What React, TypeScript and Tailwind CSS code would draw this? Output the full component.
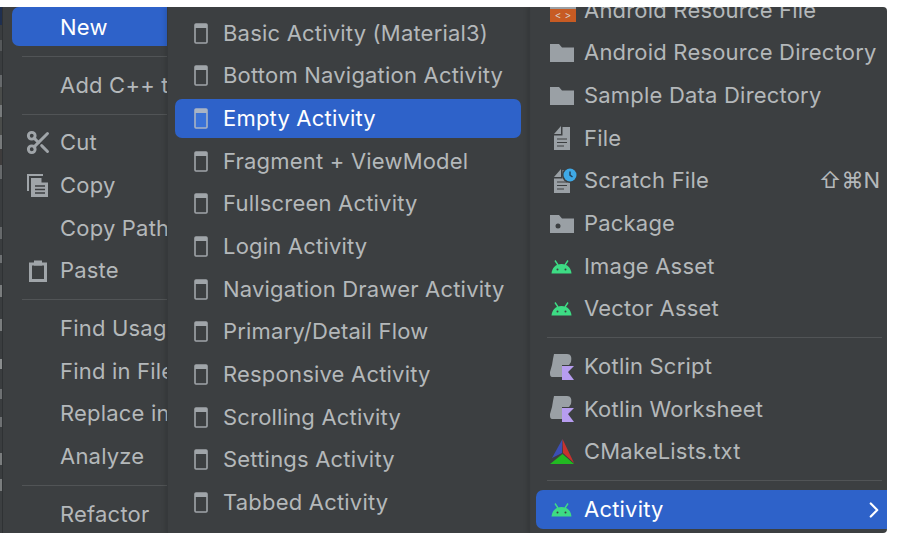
import { ChevronRight, Scissors } from 'lucide-react'
import type { ReactNode } from 'react'

const font = "font-['Inter','Noto_Sans',sans-serif]"

function Separator({ className = '' }: { className?: string }) {
  return (
    <div className={`flex h-[15px] items-center ${className}`}>
      <div className="h-px w-full bg-[#515456]" />
    </div>
  )
}

function Row({ icon, label, right, selected }: { icon?: ReactNode; label: string; right?: ReactNode; selected?: boolean }) {
  return (
    <div className={`flex h-[42.67px] shrink-0 items-center whitespace-nowrap text-[22px] tracking-[0.2px] ${selected ? 'text-white' : 'text-[#b4b8ba]'}`}>
      {icon}
      <span>{label}</span>
      {right}
    </div>
  )
}

function Phone({ selected }: { selected?: boolean }) {
  return (
    <svg width="14" height="21" viewBox="0 0 14 21" className="mr-[15px] ml-[19px] shrink-0">
      <rect x="1" y="1" width="12" height="19" rx="1" fill={selected ? '#3a72d8' : 'none'} stroke={selected ? '#a9b4c4' : '#a0a5a9'} strokeWidth="1.6" />
      <rect x="1" y="1" width="12" height="4" fill={selected ? '#a9b4c4' : '#a0a5a9'} />
    </svg>
  )
}

function Android() {
  return (
    <svg width="21" height="15" viewBox="0 0 21 15" className="shrink-0">
      <path d="M0.5 14.5C1 9 4.5 5 10.5 5S20 9 20.5 14.5Z" fill="#3ddc84" />
      <path d="M4 1.5L7 6M17 1.5L14 6" stroke="#3ddc84" strokeWidth="1.4" />
      <circle cx="6.5" cy="10.5" r="1" fill="#3c3f41" />
      <circle cx="14.5" cy="10.5" r="1" fill="#3c3f41" />
    </svg>
  )
}

function Folder({ dot }: { dot?: boolean }) {
  return (
    <svg width="24" height="18" viewBox="0 0 24 18" className="shrink-0">
      <path d="M0 0H9L12 3.5H24V18H0Z" fill="#9aa0a5" />
      {dot && <circle cx="8" cy="11" r="2.5" fill="#3c3f41" />}
    </svg>
  )
}

function FileGlyph() {
  return (
    <svg width="17" height="24" viewBox="0 0 17 24">
      <path d="M8 0V8H1Z" fill="#9aa0a5" />
      <path d="M1 9.5H9.5V1H17V24H1Z" fill="#9aa0a5" />
      <path d="M4 13H14M4 16.5H14M4 20H11" stroke="#3c3f41" strokeWidth="1.2" />
    </svg>
  )
}

function ClockBadge() {
  return (
    <svg width="16" height="16" viewBox="0 0 16 16" className="absolute -top-[2px] left-[9px]">
      <circle cx="8" cy="8" r="8" fill="#3c3f41" />
      <circle cx="8" cy="8" r="6.5" fill="#3fa9e6" />
      <path d="M8 4.5V8.2L10.5 10" fill="none" stroke="#24415a" strokeWidth="1.5" />
    </svg>
  )
}

function Kotlin() {
  return (
    <svg width="24" height="26" viewBox="0 0 24 26" className="shrink-0">
      <path d="M4 0H17C21 0 22 3 21 8L19 11H12V23H3C0 23 0 21 0 18L2 11L3 5Z" fill="#9aa0a5" />
      <path d="M12 12H24L18 18L24 26H12Z" fill="#b79df0" />
    </svg>
  )
}

function CMake() {
  return (
    <svg width="25" height="25" viewBox="0 0 25 25" className="shrink-0">
      <path d="M12.5 0L2 19L12 14Z" fill="#3b4fb5" />
      <path d="M12.5 0L24 24L13 14Z" fill="#c8322e" />
      <path d="M0 25L12.5 15L24 25Z" fill="#22b922" />
    </svg>
  )
}

function CopyGlyph() {
  return (
    <svg width="22" height="23" viewBox="0 0 22 23" className="ml-[1px]">
      <path d="M1 17V1H16" fill="none" stroke="#a0a5a9" strokeWidth="2" />
      <path d="M4 4H14.5V8.5H21V23H4Z" fill="#a0a5a9" />
      <path d="M8 12H18M8 15.5H18M8 19H18" stroke="#3c3f41" strokeWidth="1.4" />
    </svg>
  )
}

function PasteGlyph() {
  return (
    <svg width="18" height="22" viewBox="0 0 18 22" className="ml-[3px]">
      <path d="M1.5 4H16.5V20.5H1.5Z" fill="none" stroke="#a0a5a9" strokeWidth="3" />
      <rect x="5" y="0.5" width="8" height="5" fill="#a0a5a9" />
    </svg>
  )
}

function Slot({ children }: { children?: ReactNode }) {
  return <div className="flex w-[57px] shrink-0 items-center pl-[23px]">{children}</div>
}

const middle = [
  'Basic Activity (Material3)',
  'Bottom Navigation Activity',
  'Empty Activity',
  'Fragment + ViewModel',
  'Fullscreen Activity',
  'Login Activity',
  'Navigation Drawer Activity',
  'Primary/Detail Flow',
  'Responsive Activity',
  'Scrolling Activity',
  'Settings Activity',
  'Tabbed Activity',
]

// slivers of the editor text that show behind the menu: [height, colour]
const strip: [number, string][] = [
  [18, '#1f2f4f'], [15, '#3a3d3f'], [11, '#55585a'], [24, '#3a3d3f'], [12, '#66696b'], [18, '#4a4c4a'],
  [12, '#777a7b'], [18, '#4a4c4a'], [14, '#777a7b'], [16, '#3e3c3c'], [14, '#66696b'], [48, '#3a3d3f'],
  [12, '#66696b'], [16, '#3a3d3f'], [8, '#6e7173'], [22, '#3a3d3f'], [12, '#7a7d7e'], [22, '#3a3d3f'],
  [12, '#7a7d7e'], [28, '#3a3d3f'], [10, '#8a8d8e'], [20, '#3a3d3f'], [10, '#6e7173'], [18, '#3a3d3f'],
  [10, '#6e7173'], [26, '#3a3d3f'], [12, '#7a7d7e'], [14, '#3a3d3f'], [12, '#7a7d7e'],
]

export default function App() {
  return (
    <div className={`h-[541px] w-[897px] overflow-hidden bg-white pt-[7px] pr-[10px] pb-[8px] ${font}`}>
      <div className="flex h-full overflow-hidden rounded-r-[4px] bg-[#3c3f41]">
        <div className="flex w-[3px] shrink-0 flex-col overflow-hidden border-r border-[#2f3234]">
          {strip.map(([h, c], i) => (
            <div key={i} className="shrink-0" style={{ height: h, backgroundColor: c }} />
          ))}
        </div>

        {/* main context menu */}
        <div className="w-[164px] shrink-0 overflow-hidden">
          <div className="ml-[9px] flex h-[39px] items-center rounded-l-[7px] bg-[#2e62c9] pt-[1px] pl-[48px] text-[22px] tracking-[0.2px] text-white">New</div>
          <div className="h-[3px]" />
          <Separator className="pl-[19px]" />
          <Row label="Add C++ to Module" icon={<Slot />} />
          <Separator className="pl-[19px]" />
          <Row label="Cut" icon={<Slot><Scissors size={27} strokeWidth={2.6} className="-ml-[1px] text-[#a0a5a9]" /></Slot>} />
          <Row label="Copy" icon={<Slot><CopyGlyph /></Slot>} />
          <Row label="Copy Path" icon={<Slot />} />
          <Row label="Paste" icon={<Slot><PasteGlyph /></Slot>} />
          <Separator className="pl-[19px]" />
          <Row label="Find Usages" icon={<Slot />} />
          <Row label="Find in Files" icon={<Slot />} />
          <Row label="Replace in Files" icon={<Slot />} />
          <Row label="Analyze" icon={<Slot />} />
          <Separator className="pl-[19px]" />
          <Row label="Refactor" icon={<Slot />} />
        </div>

        {/* activity templates */}
        <div className="w-[362px] shrink-0 border-l border-[#36393b] pt-[5px] shadow-[-2px_0_4px_rgba(0,0,0,0.12)]">
          {middle.map(m =>
            m === 'Empty Activity' ? (
              <div key={m} className="mr-[8px] ml-[7px] flex h-[42.67px] items-center">
                <div className="flex h-[39px] w-full items-center rounded-[7px] bg-[#2e62c9] text-[22px] tracking-[0.2px] text-white">
                  <Phone selected />
                  <span>{m}</span>
                </div>
              </div>
            ) : (
              <div key={m} className="ml-[7px]">
                <Row label={m} icon={<Phone />} />
              </div>
            ),
          )}
        </div>

        {/* new submenu */}
        <div className="min-w-0 flex-1 overflow-hidden border-l border-[#36393b] shadow-[-2px_0_4px_rgba(0,0,0,0.12)]">
          <div className="-mt-[18px] pl-[20px]">
            <Row
              label="Android Resource File"
              icon={
                <div className="mr-[8px] flex h-[42px] w-[26px] shrink-0 flex-col justify-center">
                  <div className="h-[10px] bg-[#9aa0a5]" />
                  <div className="flex h-[13px] items-center justify-center bg-[#c75b23] text-[10px] leading-none text-[#d9d2cc]">&lt; &gt;</div>
                </div>
              }
            />
            <Row label="Android Resource Directory" icon={<div className="mr-[10px]"><Folder /></div>} />
            <Row label="Sample Data Directory" icon={<div className="mr-[10px]"><Folder /></div>} />
            <Row label="File" icon={<div className="mr-[14px] ml-[3px] flex"><FileGlyph /></div>} />
            <Row
              label="Scratch File"
              icon={
                <div className="relative mr-[14px] ml-[3px] flex">
                  <FileGlyph />
                  <ClockBadge />
                </div>
              }
              right={<span className="mr-[7px] ml-auto tracking-normal">⇧⌘N</span>}
            />
            <Row label="Package" icon={<div className="mr-[10px]"><Folder dot /></div>} />
            <Row label="Image Asset" icon={<div className="mr-[12px] ml-[1px] flex"><Android /></div>} />
            <Row label="Vector Asset" icon={<div className="mr-[12px] ml-[1px] flex"><Android /></div>} />
          </div>
          <Separator className="pr-[5px] pl-[17px]" />
          <div className="pl-[20px]">
            <Row label="Kotlin Script" icon={<div className="mr-[10px] flex"><Kotlin /></div>} />
            <Row label="Kotlin Worksheet" icon={<div className="mr-[10px] flex"><Kotlin /></div>} />
            <Row label="CMakeLists.txt" icon={<div className="mr-[9px] flex"><CMake /></div>} />
          </div>
          <Separator className="pr-[5px] pl-[17px]" />
          <div className="mt-[2px] ml-[6px] flex h-[39px] items-center rounded-l-[7px] bg-[#2e62c9] pl-[15px] text-[22px] tracking-[0.2px] text-white">
            <div className="mr-[12px] flex"><Android /></div>
            <span>Activity</span>
            <ChevronRight size={26} className="ml-auto" />
          </div>
        </div>
      </div>
    </div>
  )
}
